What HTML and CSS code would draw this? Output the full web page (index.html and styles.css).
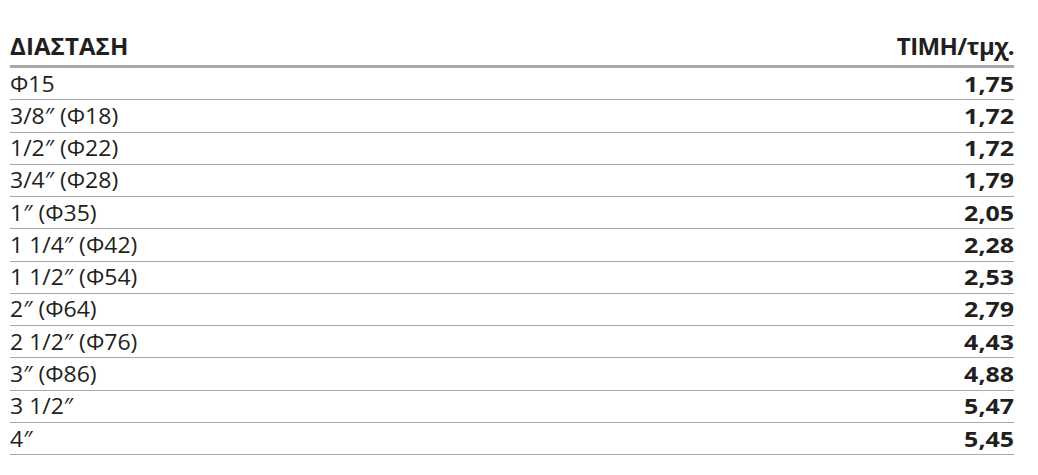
FILE: index.html
```html
<!DOCTYPE html>
<html lang="el">
<head>
<meta charset="utf-8">
<title>Τιμές</title>
<link rel="stylesheet" href="styles.css">
</head>
<body>
<div class="table">
  <div class="head">
    <span class="hl">ΔΙΑΣΤΑΣΗ</span>
    <span class="hr">ΤΙΜΗ/τμχ.</span>
  </div>
  <div class="row"><span class="dim">Φ15</span><span class="price">1,75</span></div>
  <div class="row"><span class="dim">3/8″ (Φ18)</span><span class="price">1,72</span></div>
  <div class="row"><span class="dim">1/2″ (Φ22)</span><span class="price">1,72</span></div>
  <div class="row"><span class="dim">3/4″ (Φ28)</span><span class="price">1,79</span></div>
  <div class="row"><span class="dim">1″ (Φ35)</span><span class="price">2,05</span></div>
  <div class="row"><span class="dim">1 1/4″ (Φ42)</span><span class="price">2,28</span></div>
  <div class="row"><span class="dim">1 1/2″ (Φ54)</span><span class="price">2,53</span></div>
  <div class="row"><span class="dim">2″ (Φ64)</span><span class="price">2,79</span></div>
  <div class="row"><span class="dim">2 1/2″ (Φ76)</span><span class="price">4,43</span></div>
  <div class="row"><span class="dim">3″ (Φ86)</span><span class="price">4,88</span></div>
  <div class="row"><span class="dim">3 1/2″</span><span class="price">5,47</span></div>
  <div class="row"><span class="dim">4″</span><span class="price">5,45</span></div>
</div>
</body>
</html>
```
FILE: styles.css
```css
html, body {
  margin: 0;
  padding: 0;
  background: #ffffff;
}
body {
  font-family: "Open Sans", "Noto Sans", sans-serif;
  color: #231f20;
}
.table {
  width: 1004px;
  margin-left: 10px;
  display: flex;
  flex-direction: column;
}
.head {
  box-sizing: border-box;
  height: 68px;
  display: flex;
  justify-content: space-between;
  align-items: flex-end;
  padding-bottom: 7px;
  border-bottom: 3px solid #a7a9ac;
  font-weight: 700;
  font-size: 24px;
  line-height: 24px;
}
.hl {
  letter-spacing: 0.1px;
}
.hr {
  letter-spacing: -0.6px;
}
.row {
  box-sizing: border-box;
  height: 32.27px;
  display: flex;
  justify-content: space-between;
  align-items: center;
  border-bottom: 1px solid #a7a9ac;
  font-size: 21.5px;
  line-height: 24px;
}
.dim {
  font-weight: 400;
  display: inline-block;
  transform: scaleX(1.07);
  transform-origin: left center;
}
.price {
  font-weight: 700;
  display: inline-block;
  transform: scaleX(1.16);
  transform-origin: right center;
}
```
